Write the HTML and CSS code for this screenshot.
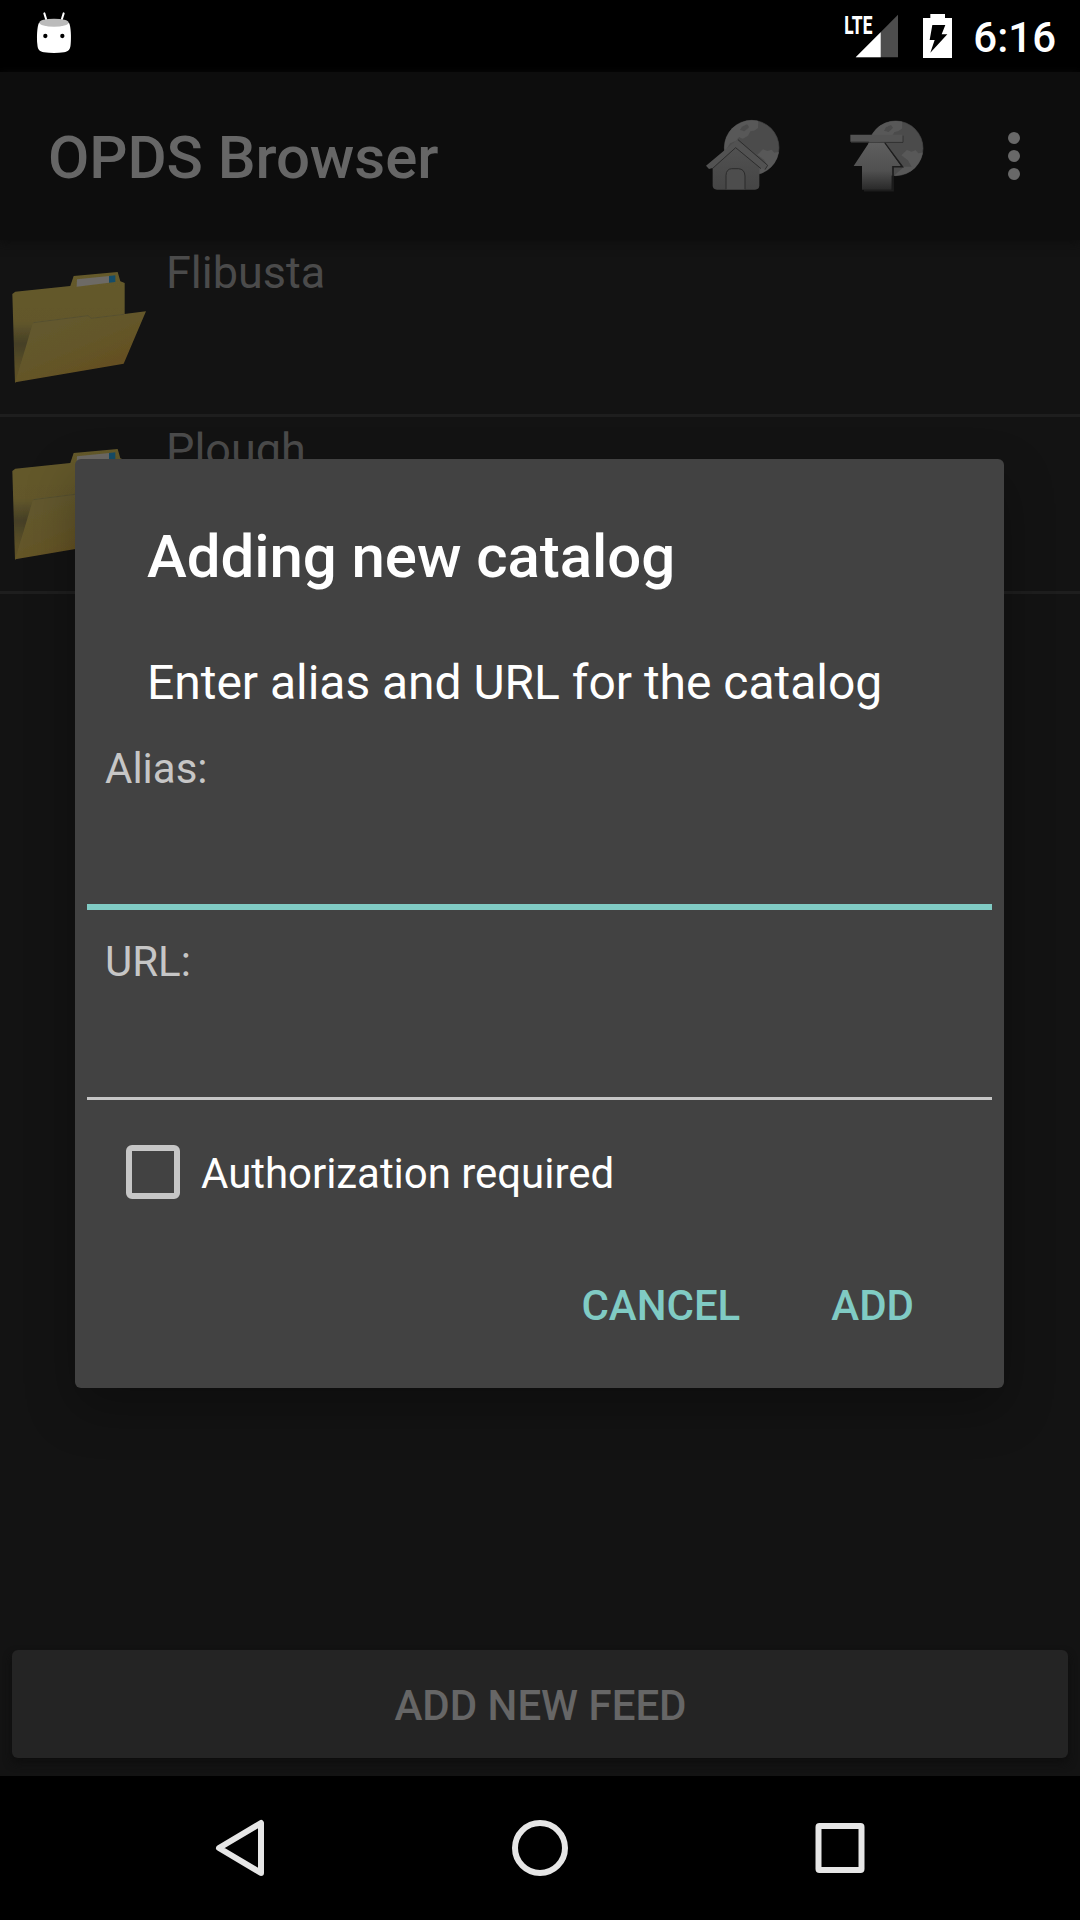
FILE: index.html
```html
<!DOCTYPE html>
<html lang="en">
<head>
<meta charset="utf-8">
<title>OPDS Browser</title>
<link rel="stylesheet" href="styles.css">
</head>
<body>
<div class="screen">
  <header class="status">
    <svg class="robot" viewBox="105 33 114 132" aria-hidden="true">
      <path d="M133 40L141 66M191 40L183 66" stroke="#fff" stroke-width="6" stroke-linecap="round"/>
      <path d="M117 68Q162 88 207 68C213 80 214 112 212 133C211 151 203 155 192 157Q162 161 132 157C120 155 113 151 112 133C110 112 111 80 117 68Z" fill="#fff"/>
      <ellipse cx="162" cy="68" rx="44" ry="12" fill="#bbb"/>
      <circle cx="136" cy="108" r="6.5" fill="#000"/><circle cx="187" cy="108" r="6.5" fill="#000"/>
    </svg>
    <div class="status-right">
      <svg class="signal" viewBox="72 11 165 165" aria-hidden="true">
        <path d="M107 170.500L234 43.500V170.500Z" fill="#4d4d4d"/>
        <path d="M107 170.500L182 95.500V170.500Z" fill="#fff"/>
        <text class="lte" x="73" y="101" textLength="84" lengthAdjust="spacingAndGlyphs">LTE</text>
      </svg>
      <svg class="battery" viewBox="309 42 87 132" aria-hidden="true">
        <path d="M309 54H331V42H375V54H396V174H309Z" fill="#fff"/>
        <path d="M337 75H376L365 103H382L331 158L344 120H329Z" fill="#000"/>
      </svg>
      <span class="clock">6:16</span>
    </div>
  </header>

  <div class="appbar">
    <h1>OPDS Browser</h1>
    <svg class="action" viewBox="72 57 234 222" aria-label="Home catalog">
      <defs>
        <linearGradient id="house" x1="0" y1="0" x2="0" y2="1"><stop offset="0" stop-color="#515151"/><stop offset="1" stop-color="#454545"/></linearGradient>
        <clipPath id="disc"><circle cx="215" cy="143" r="82"/></clipPath>
        <filter id="blend"><feGaussianBlur stdDeviation="2"/></filter>
      </defs>
      <circle cx="215" cy="143" r="82" fill="#4b4b4b" stroke="#454545" stroke-width="2"/>
      <g clip-path="url(#disc)"><g fill="#585858" filter="url(#blend)">
        <path d="M132 60H235L234 84L222 92L211 94L204 107L188 116L177 111L168 123L150 130L132 160Z"/>
        <path d="M249 148L262 153L275 149L283 158L300 155V230H238V198L263 198L252 179L232 164Z"/>
        <path d="M186 80L201 73L207 82L194 94L180 90Z" fill="#4b4b4b"/>
      </g></g>
      <path d="M98 202L167 143L238 202V256Q238 269 225 269H111Q98 269 98 256Z" fill="url(#house)"/>
      <path d="M138 268V226Q139 207 155 206H175Q194 207 195 228V268" fill="#4d4d4d" stroke="#2b2b2b" stroke-width="3"/>
      <path d="M78 197L171 119L262 195L255 208L243 204L167 143L98 204L87 207Z" fill="#525252"/>
      <path d="M98 205L167 143L243 206M174 119L263 196L255 209" fill="none" stroke="#2d2d2d" stroke-width="3"/>
    </svg>
    <svg class="action upload" viewBox="504 57 234 222" aria-label="Up">
      <defs>
        <linearGradient id="arrow" x1="0" y1="0" x2="0" y2="1"><stop offset="0" stop-color="#5f5f5f"/><stop offset=".6" stop-color="#505050"/><stop offset="1" stop-color="#292929"/></linearGradient>
      </defs>
      <g transform="translate(432 2)">
        <circle cx="215" cy="143" r="82" fill="#4b4b4b" stroke="#454545" stroke-width="2"/>
        <g clip-path="url(#disc)"><g fill="#585858" filter="url(#blend)">
          <path d="M132 60H235L234 84L222 92L211 94L204 107L188 116L177 111L168 123L132 160Z"/>
          <path d="M249 148L262 153L275 149L283 158L300 155V230H205L240 198L263 198L252 179L232 164Z"/>
          <path d="M186 80L201 73L207 82L194 94L180 90Z" fill="#4b4b4b"/>
        </g></g>
      </g>
      <path d="M614 129L667 200H639V272H552" fill="none" stroke="#1d1d1d" stroke-width="5"/>
      <path d="M513 127H669V107" fill="none" stroke="#303030" stroke-width="3"/>
      <path d="M511 104H667V125H511Z" fill="#535353"/>
      <path d="M567 128H612L662 198H635V269H546V198H521Z" fill="url(#arrow)"/>
    </svg>
    <svg class="more" viewBox="978 90 48 156" fill="#686868" aria-label="More options">
      <circle cx="1002" cy="114" r="18"/><circle cx="1002" cy="168" r="18"/><circle cx="1002" cy="222" r="18"/>
    </svg>
  </div>

  <main class="content">
    <ul class="feeds">
      <li>
        <svg class="folder" viewBox="0 129 450 381" aria-hidden="true">
          <defs>
            <linearGradient id="back" x1="0" y1="0" x2="0" y2="1"><stop offset="0" stop-color="#655a2b"/><stop offset=".45" stop-color="#62572b"/><stop offset=".65" stop-color="#453f26"/><stop offset=".85" stop-color="#5a4f28"/><stop offset="1" stop-color="#5d5128"/></linearGradient>
            <linearGradient id="front" x1="0" y1="0" x2=".8" y2="1"><stop offset="0" stop-color="#625a31"/><stop offset=".5" stop-color="#64572a"/><stop offset="1" stop-color="#654b1c"/></linearGradient>
            <filter id="soft" x="-5%" y="-5%" width="110%" height="110%"><feGaussianBlur stdDeviation="2.200"/></filter>
          </defs>
          <g filter="url(#soft)">
            <path d="M37 222L46 215L211 198L221 168L353 156L361 184L374 189V290L45 488Z" fill="url(#back)"/>
            <path d="M231 178L327 168V188L230 200Z" fill="#6d6b65"/>
            <path d="M327 168L346 166V186L327 188Z" fill="#174d67"/>
            <path d="M46 487L96 318Q99 307 111 304L264 287L274 295L438 274L371 431Z" fill="url(#front)"/>
            <path d="M100 308L264 287L274 295L372 283" fill="none" stroke="#57502f" stroke-width="3"/>
          </g>
        </svg>
        <span>Flibusta</span>
      </li>
      <li>
        <svg class="folder" viewBox="0 129 450 381" aria-hidden="true">
          <g filter="url(#soft)">
            <path d="M37 222L46 215L211 198L221 168L353 156L361 184L374 189V290L45 488Z" fill="url(#back)"/>
            <path d="M231 178L327 168V188L230 200Z" fill="#6d6b65"/>
            <path d="M327 168L346 166V186L327 188Z" fill="#174d67"/>
            <path d="M46 487L96 318Q99 307 111 304L264 287L274 295L438 274L371 431Z" fill="url(#front)"/>
            <path d="M100 308L264 287L274 295L372 283" fill="none" stroke="#57502f" stroke-width="3"/>
          </g>
        </svg>
        <span>Plough</span>
      </li>
    </ul>
    <button class="new-feed" type="button">ADD NEW FEED</button>
  </main>

  <nav class="navbar">
    <svg viewBox="0 0 60 60" aria-label="Back"><path d="M51 5V55L9 30Z"/></svg>
    <svg viewBox="0 0 60 60" aria-label="Home"><circle cx="30" cy="30" r="25"/></svg>
    <svg viewBox="0 0 60 60" aria-label="Recent apps"><rect x="8.500" y="8" width="43" height="44" rx="1"/></svg>
  </nav>

  <section class="dialog" role="dialog">
    <h2>Adding new catalog</h2>
    <p class="message">Enter alias and URL for the catalog</p>
    <form class="form">
      <label for="alias">Alias:</label>
      <input class="field focused" id="alias" type="text">
      <label class="url-label" for="url">URL:</label>
      <input class="field" id="url" type="text">
      <div class="check"><span class="box"></span><span class="check-text">Authorization required</span></div>
      <div class="actions"><button type="button">CANCEL</button><button type="button">ADD</button></div>
    </form>
  </section>
</div>
</body>
</html>
```
FILE: styles.css
```css
* { box-sizing: border-box; }
body { margin: 0; background: #000; font-family: Roboto, sans-serif; }
h1, h2, p, ul { margin: 0; padding: 0; }
h1, h2 { font-size: 60px; font-weight: 500; line-height: 70px; letter-spacing: -.07px; white-space: nowrap; }
button { padding: 0; border: 0; background: none; font: 500 42px/50px Roboto, sans-serif; white-space: nowrap; }
svg { display: block; flex: none; }

.screen { position: relative; display: flex; flex-direction: column; width: 1080px; height: 1920px; overflow: hidden; }

.status { display: flex; align-items: flex-start; justify-content: space-between; height: 72px; padding: 0 24px 0 35px; background: #000; }
.robot { width: 38px; height: 44px; margin-top: 11px; }
.status-right { display: flex; align-items: flex-start; }
.signal { width: 55px; height: 55px; margin: 3.667px 24px 0 0; overflow: visible; }
.lte { font: 800 79px Roboto, sans-serif; fill: #fff; }
.battery { width: 29px; height: 44px; margin: 14px 21px 0 0; }
.clock { color: #fff; font-size: 42px; font-weight: 500; line-height: 50px; margin-top: 13px; }

.appbar { z-index: 1; display: flex; align-items: center; height: 168px; padding: 0 58px 0 48px; background: #0d0d0d; color: #666; box-shadow: 0 2px 10px #0d0d0d; }
.appbar h1 { flex: 1; padding-top: 4px; }
.action { width: 78px; height: 74px; }
.upload { margin: 0 80px 0 66px; }
.more { width: 16px; height: 52px; }

.content { flex: 1; display: flex; flex-direction: column; justify-content: space-between; padding-bottom: 18px; background: #131313; }
.feeds { list-style: none; }
.feeds li { display: flex; align-items: flex-start; gap: 16px; height: 177px; border-bottom: 3px solid #1e1e1e; color: #4b4b4b; font-size: 45px; line-height: 53px; }
.feeds span { padding-top: 6px; }
.folder { width: 150px; height: 127px; margin-top: 23px; }
.new-feed { height: 108px; margin: 0 12px; padding: 3px 0 0 1px; border-radius: 6px; background: #242424; color: #666; box-shadow: 0 5px 8px #0e0e0e; }

.navbar { display: flex; align-items: center; justify-content: center; gap: 240px; height: 144px; background: #000; }
.navbar svg { width: 60px; height: 60px; fill: none; stroke: #e6e6e6; stroke-width: 6; stroke-linejoin: round; }

.dialog { position: absolute; z-index: 2; left: 75px; top: 459px; width: 929px; height: 929px; padding-top: 63px; border-radius: 6px; background: #424242; color: #fff; box-shadow: 0 20px 50px rgba(0, 0, 0, .28); }
.dialog h2 { padding-left: 72px; }
.message { margin-top: 63px; padding-left: 72px; font-size: 48px; line-height: 56px; letter-spacing: -.03px; }
.form { display: flex; flex-direction: column; margin-top: 33px; padding: 0 12px; }
.form label { padding-left: 18px; color: #c6c6c6; font-size: 42px; line-height: 50px; }
.url-label { margin-top: 27px; }
.field { height: 113px; padding: 0 18px; border: 0; border-bottom: 3px solid #c6c6c6; outline: 0; background: transparent; color: #fff; font: 48px Roboto, sans-serif; }
.field.focused { height: 116px; border-bottom: 6px solid #80cbc4; }
.check { display: flex; gap: 21px; margin: 45px 0 0 39px; font-size: 42px; line-height: 54px; letter-spacing: -.04px; }
.box { width: 54px; height: 54px; border: 6px solid #c6c6c6; border-radius: 6px; }
.check-text { padding-top: 2px; }
.actions { display: flex; justify-content: flex-end; gap: 91px; margin-top: 80px; padding-right: 78px; }
.actions button { color: #80cbc4; }
```
